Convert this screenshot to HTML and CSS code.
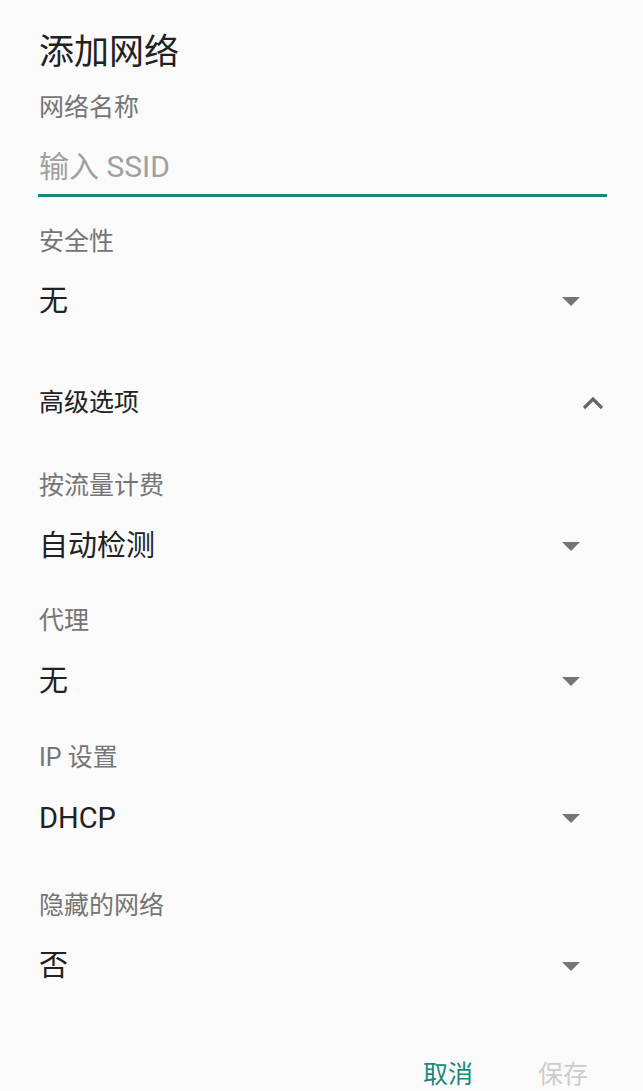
FILE: index.html
```html
<!DOCTYPE html>
<html lang="zh-CN">
<head>
<meta charset="utf-8">
<title>添加网络</title>
<link rel="stylesheet" href="styles.css">
</head>
<body>
<div class="dialog">
  <h1 class="title">添加网络</h1>

  <div class="label label-ssid">网络名称</div>
  <div class="input">输入 SSID</div>

  <div class="label label-security">安全性</div>
  <div class="spinner spinner-first">
    <span class="value">无</span>
    <svg class="arrow" width="18" height="9" viewBox="0 0 18 9"><polygon points="0,0 18,0 9,9" fill="#757575"/></svg>
  </div>

  <div class="advanced">
    <span class="value">高级选项</span>
    <svg class="chevron" width="24" height="16" viewBox="0 0 24 16"><polyline points="3,13 12,4 21,13" fill="none" stroke="#666666" stroke-width="3.2"/></svg>
  </div>

  <div class="label label-metered">按流量计费</div>
  <div class="spinner">
    <span class="value">自动检测</span>
    <svg class="arrow" width="18" height="9" viewBox="0 0 18 9"><polygon points="0,0 18,0 9,9" fill="#757575"/></svg>
  </div>

  <div class="label label-proxy">代理</div>
  <div class="spinner">
    <span class="value">无</span>
    <svg class="arrow" width="18" height="9" viewBox="0 0 18 9"><polygon points="0,0 18,0 9,9" fill="#757575"/></svg>
  </div>

  <div class="label label-ip">IP 设置</div>
  <div class="spinner">
    <span class="value">DHCP</span>
    <svg class="arrow" width="18" height="9" viewBox="0 0 18 9"><polygon points="0,0 18,0 9,9" fill="#757575"/></svg>
  </div>

  <div class="label label-hidden">隐藏的网络</div>
  <div class="spinner">
    <span class="value">否</span>
    <svg class="arrow" width="18" height="9" viewBox="0 0 18 9"><polygon points="0,0 18,0 9,9" fill="#757575"/></svg>
  </div>

  <div class="buttons">
    <button class="btn btn-cancel">取消</button>
    <button class="btn btn-save" disabled>保存</button>
  </div>
</div>
</body>
</html>
```

FILE: styles.css
```css
html, body {
  margin: 0;
  padding: 0;
  background: #fafafa;
}

body {
  font-family: Roboto, "Noto Sans CJK SC", "Noto Sans", sans-serif;
  color: #212121;
  height: 1091px;
  overflow: hidden;
}

.dialog {
  padding: 31px 36px 0 39px;
}

.title {
  margin: 0;
  font-size: 35px;
  font-weight: 400;
  line-height: 44px;
  color: #212121;
}

.label {
  font-size: 25px;
  line-height: 30px;
  color: #757575;
}

.label-ssid { margin-top: 18px; }
.label-security { margin-top: 30px; }
.label-metered { margin-top: 48px; }
.label-proxy { margin-top: 40px; }
.label-ip { margin-top: 42px; }
.label-hidden { margin-top: 53px; }

.input {
  margin-top: 24px;
  margin-left: -1px;
  padding-left: 1px;
  font-size: 30px;
  line-height: 40px;
  color: #a0a0a0;
  padding-bottom: 7px;
  border-bottom: 3px solid #17897c;
}

.spinner {
  margin-top: 25px;
  height: 40px;
  display: flex;
  align-items: center;
  justify-content: space-between;
  padding-right: 27px;
}

.spinner-first {
  margin-top: 24px;
}

.value {
  font-size: 29px;
  line-height: 40px;
  color: #212121;
}

.arrow {
  display: block;
}

.advanced {
  margin-top: 62px;
  height: 40px;
  display: flex;
  align-items: center;
  justify-content: space-between;
  padding-right: 2px;
}

.advanced .value {
  font-size: 25px;
}

.chevron {
  display: block;
}

.buttons {
  margin-top: 69px;
  display: flex;
  justify-content: flex-end;
  gap: 33px;
  padding-right: 3px;
}

.btn {
  font-family: Roboto, "Noto Sans CJK SC", "Noto Sans", sans-serif;
  font-size: 25px;
  line-height: 40px;
  padding: 0 16px;
  border: none;
  background: transparent;
}

.btn-cancel {
  color: #1a8a7c;
}

.btn-save {
  color: #cccccc;
}
```
